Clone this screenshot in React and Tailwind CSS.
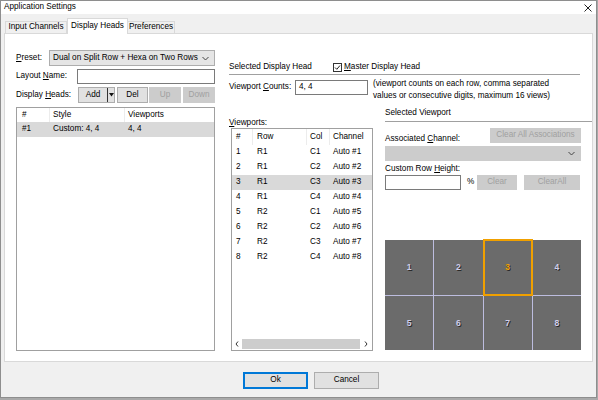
import React from "react";

const font = "font-['Liberation_Sans',Arial,sans-serif]";

function Btn({ w, children, disabled, active }) {
  let look = "bg-[#e1e1e1] border border-[#adadad]";
  if (disabled) look = "bg-[#cccccc] border border-[#cccccc] text-[#a0a0a0]";
  if (active) look = "bg-[#e1e1e1] border border-[#0078d7] shadow-[inset_0_0_0_1px_#0078d7]";
  return (
    <div className={`h-full flex items-center justify-center shrink-0 ${w} ${look}`}>
      {children}
    </div>
  );
}

function Chevron() {
  return (
    <svg width="7" height="5" viewBox="0 0 7 5">
      <path d="M0.5 1 L3.5 4 L6.5 1" fill="none" stroke="#444" strokeWidth="1" />
    </svg>
  );
}

const heads = [{ n: "#1", style: "Custom: 4, 4", vp: "4, 4" }];

const viewports = [
  ["1", "R1", "C1", "Auto #1"],
  ["2", "R1", "C2", "Auto #2"],
  ["3", "R1", "C3", "Auto #3"],
  ["4", "R1", "C4", "Auto #4"],
  ["5", "R2", "C1", "Auto #5"],
  ["6", "R2", "C2", "Auto #6"],
  ["7", "R2", "C3", "Auto #7"],
  ["8", "R2", "C4", "Auto #8"],
];

export default function App() {
  return (
    <div className={`w-[598px] h-[400px] bg-[#a9a9a9] text-[8.2px] leading-none text-black ${font}`}>
      <div className="w-[597px] h-[398px] bg-[#f0f0f0] border border-[#8e8e8e] flex flex-col">

        {/* TITLE BAR */}
        <div className="h-[13px] bg-white flex items-center justify-between pl-[3px] pr-[4px]">
          <span>Application Settings</span>
          <svg width="8" height="8" viewBox="0 0 8 8">
            <path d="M0.5 0.5 L7.5 7.5 M7.5 0.5 L0.5 7.5" stroke="#222" strokeWidth="1" />
          </svg>
        </div>

        {/* TABS */}
        <div className="h-[19px] flex items-end pl-[4px]">
          <div className="h-[12px] w-[62px] border border-b-0 border-[#d9d9d9] bg-[#f0f0f0] flex items-center justify-center">
            Input Channels
          </div>
          <div className="h-[16px] w-[61px] border border-b-0 border-[#d9d9d9] bg-white flex items-center justify-center relative z-10 -mb-px">
            Display Heads
          </div>
          <div className="h-[12px] w-[47px] border border-b-0 border-l-0 border-[#d9d9d9] bg-[#f0f0f0] flex items-center justify-center">
            Preferences
          </div>
        </div>

        {/* PANEL */}
        <div className="mx-[3px] h-[329px] bg-white border border-[#d9d9d9] flex pl-[11px] pt-[16px]">

          {/* LEFT COLUMN */}
          <div className="w-[199px] flex flex-col">
            <div className="h-[16px] flex items-center">
              <span className="w-[33px]"><u>P</u>reset:</span>
              <div className="w-[166px] h-full bg-[#e5e5e5] border border-[#adadad] flex items-center justify-between pl-[3px] pr-[5px]">
                <span>Dual on Split Row + Hexa on Two Rows</span>
                <Chevron />
              </div>
            </div>

            <div className="h-[15px] mt-[3px] flex items-center">
              <span className="w-[61px]">Layout <u>N</u>ame:</span>
              <div className="w-[138px] h-full bg-white border border-[#7a7a7a]" />
            </div>

            <div className="h-[16px] mt-[3px] flex items-center">
              <span className="w-[62px]">Display <u>H</u>eads:</span>
              <div className="w-[37px] h-full bg-[#e1e1e1] border border-[#adadad] flex">
                <div className="w-[28px] flex items-center justify-center">Add</div>
                <div className="flex-1 border-l border-[#333] flex items-center justify-center">
                  <svg width="5" height="4" viewBox="0 0 5 4">
                    <path d="M0 0 L5 0 L2.5 3.5 Z" fill="#111" />
                  </svg>
                </div>
              </div>
              <div className="w-[2px]" />
              <Btn w="w-[31px]">Del</Btn>
              <div className="w-[1px]" />
              <Btn w="w-[32px]" disabled>Up</Btn>
              <div className="w-[2px]" />
              <Btn w="w-[32px]" disabled>Down</Btn>
            </div>

            <div className="mt-[4px] h-[244px] border border-[#a0a0a0] flex flex-col">
              <div className="h-[14px] flex items-center">
                <div className="w-[33px] h-full flex items-center pl-[5px] border-r border-[#ececec]">#</div>
                <div className="w-[75px] h-full flex items-center pl-[3px] border-r border-[#ececec]">Style</div>
                <div className="flex-1 h-full flex items-center pl-[3px]">Viewports</div>
              </div>
              {heads.map((h) => (
                <div key={h.n} className="h-[15px] flex items-center bg-[#d9d9d9]">
                  <div className="w-[33px] pl-[5px]">{h.n}</div>
                  <div className="w-[75px] pl-[3px]">{h.style}</div>
                  <div className="flex-1 pl-[3px]">{h.vp}</div>
                </div>
              ))}
            </div>
          </div>

          {/* RIGHT AREA */}
          <div className="ml-[14px] flex-1 flex flex-col">
            <div className="mt-[11px] w-[351px] h-[14px] border-b border-[#a0a0a0] flex items-center">
              <span className="w-[104px]">Selected Display Head</span>
              <svg width="9" height="9" viewBox="0 0 9 9" className="mr-[2px]">
                <rect x="0.5" y="0.5" width="8" height="8" fill="white" stroke="#333" />
                <path d="M2 4.5 L3.8 6.3 L7 2.5" fill="none" stroke="#222" strokeWidth="1" />
              </svg>
              <span><u>M</u>aster Display Head</span>
            </div>

            <div className="mt-[5px] flex items-start">
              <div className="w-[66px] h-[15px] flex items-center">
                <span>Viewport <u>C</u>ounts:</span>
              </div>
              <div className="w-[73px] h-[15px] border border-[#7a7a7a] flex items-center pl-[3px]">4, 4</div>
              <div className="ml-[5px] leading-[12px] -mt-[2px]">
                (viewport counts on each row, comma separated
                <br />
                values or consecutive digits, maximum 16 views)
              </div>
            </div>

            <div className="flex mt-[3px]">
              {/* VIEWPORT LIST */}
              <div className="w-[143px] flex flex-col">
                <div className="mt-[14px] h-[9px] flex items-center"><span><u>V</u>iewports:</span></div>
                <div className="ml-[2px] w-[142px] h-[223px] border border-[#a0a0a0] flex flex-col">
                  <div className="h-[16px] flex items-center">
                    <div className="w-[21px] h-full flex items-center pl-[4px] border-r border-[#ececec]">#</div>
                    <div className="w-[54px] h-full flex items-center pl-[4px] border-r border-[#ececec]">Row</div>
                    <div className="w-[23px] h-full flex items-center pl-[3px] border-r border-[#ececec]">Col</div>
                    <div className="flex-1 h-full flex items-center pl-[3px]">Channel</div>
                  </div>
                  {viewports.map((v) => (
                    <div key={v[0]} className={`h-[15px] flex items-center ${v[0] === "3" ? "bg-[#d9d9d9]" : ""}`}>
                      <div className="w-[21px] pl-[4px]">{v[0]}</div>
                      <div className="w-[54px] pl-[4px]">{v[1]}</div>
                      <div className="w-[23px] pl-[3px]">{v[2]}</div>
                      <div className="flex-1 pl-[3px]">{v[3]}</div>
                    </div>
                  ))}
                  <div className="flex-1" />
                  <div className="h-[10px] mb-[1px] flex items-center">
                    <div className="w-[10px] flex items-center justify-center">
                      <svg width="4" height="6" viewBox="0 0 4 6"><path d="M3 0.5 L1 3 L3 5.5" fill="none" stroke="#333" strokeWidth="1" /></svg>
                    </div>
                    <div className="flex-1 h-full bg-[#cdcdcd]" />
                    <div className="w-[12px] flex items-center justify-center">
                      <svg width="4" height="6" viewBox="0 0 4 6"><path d="M1 0.5 L3 3 L1 5.5" fill="none" stroke="#333" strokeWidth="1" /></svg>
                    </div>
                  </div>
                </div>
              </div>

              {/* SELECTED VIEWPORT */}
              <div className="ml-[13px] flex-1 flex flex-col">
                <div className="h-[17px] border-b border-[#a0a0a0] flex items-center">Selected Viewport</div>

                <div className="w-[196px] mt-[6px] h-[15px] flex items-end justify-between">
                  <span>Associated <u>C</u>hannel:</span>
                  <Btn w="w-[91px]" disabled>Clear All Associations</Btn>
                </div>

                <div className="w-[196px] mt-[3px] h-[15px] bg-[#cccccc] border border-[#cccccc] flex items-center justify-end pr-[5px]">
                  <Chevron />
                </div>

                <div className="mt-[4px] h-[9px] flex items-center">
                  <span>Custom Row <u>H</u>eight:</span>
                </div>

                <div className="w-[196px] mt-[1px] h-[15px] flex items-center">
                  <div className="w-[76px] h-full border border-[#7a7a7a]" />
                  <span className="ml-[6px] w-[10px]">%</span>
                  <Btn w="w-[40px]" disabled>Clear</Btn>
                  <div className="w-[7px]" />
                  <Btn w="w-[56px]" disabled>ClearAll</Btn>
                </div>

                <div className="mt-[50px] w-[196px] h-[110px] grid grid-cols-4 grid-rows-2 gap-px bg-[#bdbddf]">
                  {[1, 2, 3, 4, 5, 6, 7, 8].map((n) => (
                    <div
                      key={n}
                      className={`bg-[#6b6b6b] flex items-center justify-center font-bold text-[8.5px] [text-shadow:1px_1px_0_#2a2a2a] ${
                        n === 3
                          ? "text-[#f0a000] border border-[#f0a000] ring-1 ring-[#f0a000] relative z-10"
                          : "text-[#cfcfec]"
                      }`}
                    >
                      {n}
                    </div>
                  ))}
                </div>
              </div>
            </div>
          </div>
        </div>

        {/* FOOTER */}
        <div className="mt-[10px] h-[17px] flex pl-[242px]">
          <Btn w="w-[65px]" active>Ok</Btn>
          <div className="w-[6px]" />
          <Btn w="w-[65px]">Cancel</Btn>
        </div>
      </div>
    </div>
  );
}
